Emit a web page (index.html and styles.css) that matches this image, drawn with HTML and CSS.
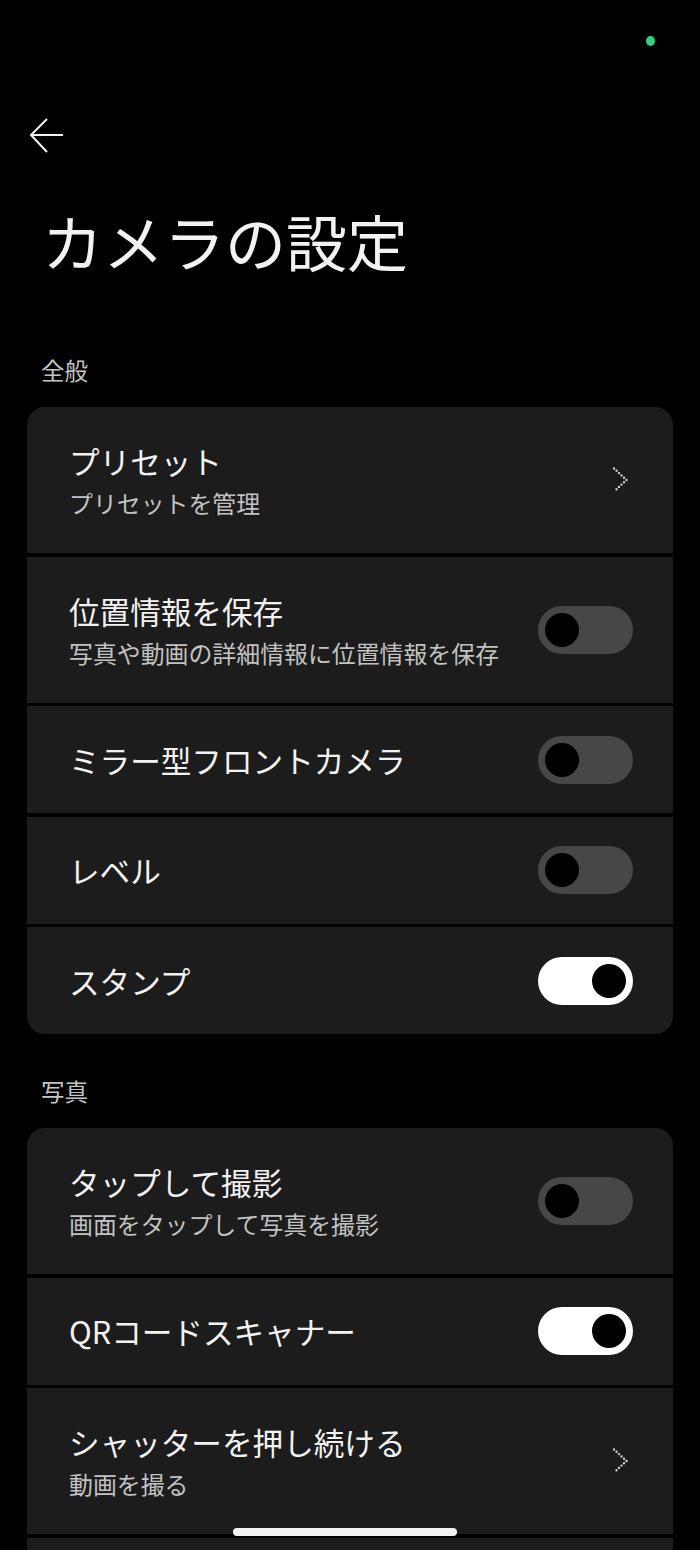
FILE: index.html
```html
<!DOCTYPE html>
<html lang="ja">
<head>
    <meta charset="UTF-8">
    <title>カメラの設定</title>
    <link rel="stylesheet" href="styles.css">
</head>
<body>
    <div class="screen">
        <div class="status">
            <span class="dot"></span>
        </div>
        <div class="topbar">
            <svg class="back" width="36" height="36" viewBox="0 0 36 36">
                <path d="M34 17H2M18 1L2 17L18 34" fill="none" stroke="#f2f2f2" stroke-width="2"/>
            </svg>
        </div>
        <h1 class="page_title">カメラの設定</h1>

        <div class="section_label">全般</div>
        <div class="card">
            <div class="row tall">
                <div class="text">
                    <div class="name">プリセット</div>
                    <div class="desc">プリセットを管理</div>
                </div>
                <svg class="chevron" width="16" height="26" viewBox="0 0 16 26">
                    <path d="M2 1.5L14.5 13L2 24.5" fill="none" stroke="#d0d0d0" stroke-width="2.4" stroke-linecap="round" stroke-dasharray="0 3.4"/>
                </svg>
            </div>
            <div class="row tall">
                <div class="text">
                    <div class="name">位置情報を保存</div>
                    <div class="desc">写真や動画の詳細情報に位置情報を保存</div>
                </div>
                <div class="switch"><span class="knob"></span></div>
            </div>
            <div class="row">
                <div class="text">
                    <div class="name">ミラー型フロントカメラ</div>
                </div>
                <div class="switch"><span class="knob"></span></div>
            </div>
            <div class="row">
                <div class="text">
                    <div class="name">レベル</div>
                </div>
                <div class="switch"><span class="knob"></span></div>
            </div>
            <div class="row">
                <div class="text">
                    <div class="name">スタンプ</div>
                </div>
                <div class="switch on"><span class="knob"></span></div>
            </div>
        </div>

        <div class="section_label second">写真</div>
        <div class="card">
            <div class="row tall">
                <div class="text">
                    <div class="name">タップして撮影</div>
                    <div class="desc">画面をタップして写真を撮影</div>
                </div>
                <div class="switch"><span class="knob"></span></div>
            </div>
            <div class="row">
                <div class="text">
                    <div class="name">QRコードスキャナー</div>
                </div>
                <div class="switch on"><span class="knob"></span></div>
            </div>
            <div class="row tall">
                <div class="text">
                    <div class="name">シャッターを押し続ける</div>
                    <div class="desc">動画を撮る</div>
                </div>
                <svg class="chevron" width="16" height="26" viewBox="0 0 16 26">
                    <path d="M2 1.5L14.5 13L2 24.5" fill="none" stroke="#d0d0d0" stroke-width="2.4" stroke-linecap="round" stroke-dasharray="0 3.4"/>
                </svg>
            </div>
            <div class="row tall"></div>
        </div>

        <div class="home_bar"></div>
    </div>
</body>
</html>
```

FILE: styles.css
```css
*{
    margin:0;
    padding:0;
    box-sizing:border-box;
}
body{
    background-color:#000;
    color:#f2f2f2;
    font-family:"Noto Sans CJK JP","Noto Sans",sans-serif;
}
.screen{
    position:relative;
    width:700px;
    height:1550px;
    overflow:hidden;
}
.status{
    height:82px;
    display:flex;
    justify-content:flex-end;
    align-items:center;
    padding-right:45px;
}
.status .dot{
    width:9px;
    height:10px;
    border-radius:50%;
    background-color:#2fd27a;
}
.topbar{
    height:108px;
    display:flex;
    align-items:center;
    padding-left:29px;
}
.back{
    display:block;
}
.page_title{
    margin-top:15px;
    padding-left:42px;
    font-size:61px;
    line-height:72px;
    font-weight:400;
}
.section_label{
    margin-top:77px;
    padding-left:41px;
    font-size:23.5px;
    line-height:32px;
    color:#c4c4c4;
}
.section_label.second{
    margin-top:41px;
}
.card{
    margin:21px 27px 0;
    border-radius:18px;
    overflow:hidden;
    display:flex;
    flex-direction:column;
    gap:3.5px;
}
.row{
    min-height:107px;
    background-color:#1c1c1c;
    display:flex;
    align-items:center;
    justify-content:space-between;
    padding:0 40px 0 42px;
}
.row.tall{
    min-height:146px;
}
.text{
    display:flex;
    flex-direction:column;
    gap:6px;
}
.name{
    font-size:30.6px;
    line-height:40px;
}
.desc{
    font-size:23.9px;
    line-height:32px;
    color:#c2c2c2;
}
.chevron{
    display:block;
    margin-right:5px;
}
.switch{
    width:95px;
    height:48px;
    border-radius:24px;
    background-color:#474747;
    display:flex;
    align-items:center;
    padding:0 7px;
    flex-shrink:0;
}
.switch .knob{
    width:34px;
    height:34px;
    border-radius:50%;
    background-color:#000;
}
.switch.on{
    background-color:#fff;
    justify-content:flex-end;
}
.home_bar{
    position:absolute;
    left:233px;
    top:1528px;
    width:224px;
    height:8px;
    border-radius:4px;
    background-color:#f2f2f2;
}
```
